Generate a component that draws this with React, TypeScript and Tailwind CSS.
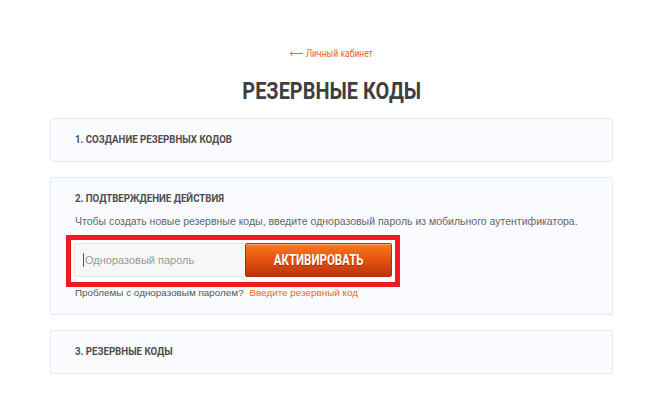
import React from "react";

const cond = { fontFamily: "Roboto, sans-serif" };

export default function App() {
  return (
    <div className="w-[657px] h-[400px] bg-white overflow-hidden" style={{ fontFamily: "Arial, 'Liberation Sans', sans-serif" }}>
      <div className="ml-[50px] w-[563px] pt-[47px]">
        <div className="flex justify-center h-[14px] items-center">
          <a className="inline-block origin-center scale-x-[0.86] text-[10px] leading-[14px] text-[#f26522] whitespace-nowrap" style={cond}>
            <span className="text-[11px] mr-[3px]" style={{ fontFamily: "'DejaVu Sans', sans-serif" }}>⟵</span>
            Личный кабинет
          </a>
        </div>
        <div className="mt-[16px] flex justify-center items-center h-[28px]">
          <h1
            className="inline-block origin-center scale-x-[0.83] text-[24px] leading-[28px] font-bold text-[#3f3f3f] whitespace-nowrap"
            style={cond}
          >
            РЕЗЕРВНЫЕ КОДЫ
          </h1>
        </div>
        <div className="mt-[13px] flex flex-col gap-[15px]">
          <div className="h-[44px] border border-[#e1ebf8] bg-[#f9fbff] rounded-[2px] pl-[24px] flex items-center">
            <span className="inline-block origin-left scale-x-[0.88] text-[11px] font-bold text-[#4d4d4d] whitespace-nowrap" style={cond}>
              1. СОЗДАНИЕ РЕЗЕРВНЫХ КОДОВ
            </span>
          </div>
          <div className="h-[138px] border border-[#e1ebf8] bg-[#f9fbff] rounded-[2px] pl-[24px] pt-[14px]">
            <div className="h-[14px] flex items-center">
              <span className="inline-block origin-left scale-x-[0.88] text-[11px] leading-[14px] font-bold text-[#4d4d4d] whitespace-nowrap" style={cond}>
                2. ПОДТВЕРЖДЕНИЕ ДЕЙСТВИЯ
              </span>
            </div>
            <div className="mt-[9px] text-[10.5px] leading-[12px] text-[#666] whitespace-nowrap">
              Чтобы создать новые резервные коды, введите одноразовый пароль из мобильного аутентификатора.
            </div>
            <div className="mt-[8px] ml-[-9px] w-[334px] h-[52px] border-[5px] border-[#ed1c24] bg-white p-[3px] flex">
              <div className="w-[172px] h-[34px] bg-[#f7f7f7] border border-[#e4e4e4] border-r-0 flex items-center pl-[8px]">
                <span className="w-px h-[14px] bg-[#555] mr-[1px]" />
                <span className="text-[11px] text-[#999]">Одноразовый пароль</span>
              </div>
              <button className="w-[147px] h-[34px] rounded-[2px] border border-[#a8330e] bg-gradient-to-b from-[#f87a20] via-[#e5520f] to-[#b9340a] shadow-[inset_0_1px_0_rgba(255,200,150,0.6)] flex items-center justify-center">
                <span
                  className="inline-block origin-center scale-x-[0.82] text-white text-[14px] font-bold whitespace-nowrap"
                  style={{ ...cond, textShadow: "0 1px 1px rgba(120,30,0,0.6)" }}
                >
                  АКТИВИРОВАТЬ
                </span>
              </button>
            </div>
            <div className="mt-0 text-[9.9px] leading-[12px] text-[#555] whitespace-nowrap">
              Проблемы с одноразовым паролем?{" "}
              <a className="ml-[3px] text-[#f26522]">Введите резервный код</a>
            </div>
          </div>
          <div className="h-[44px] border border-[#e1ebf8] bg-[#f9fbff] rounded-[2px] pl-[24px] flex items-center">
            <span className="inline-block origin-left scale-x-[0.88] text-[11px] font-bold text-[#4d4d4d] whitespace-nowrap" style={cond}>
              3. РЕЗЕРВНЫЕ КОДЫ
            </span>
          </div>
        </div>
      </div>
    </div>
  );
}
